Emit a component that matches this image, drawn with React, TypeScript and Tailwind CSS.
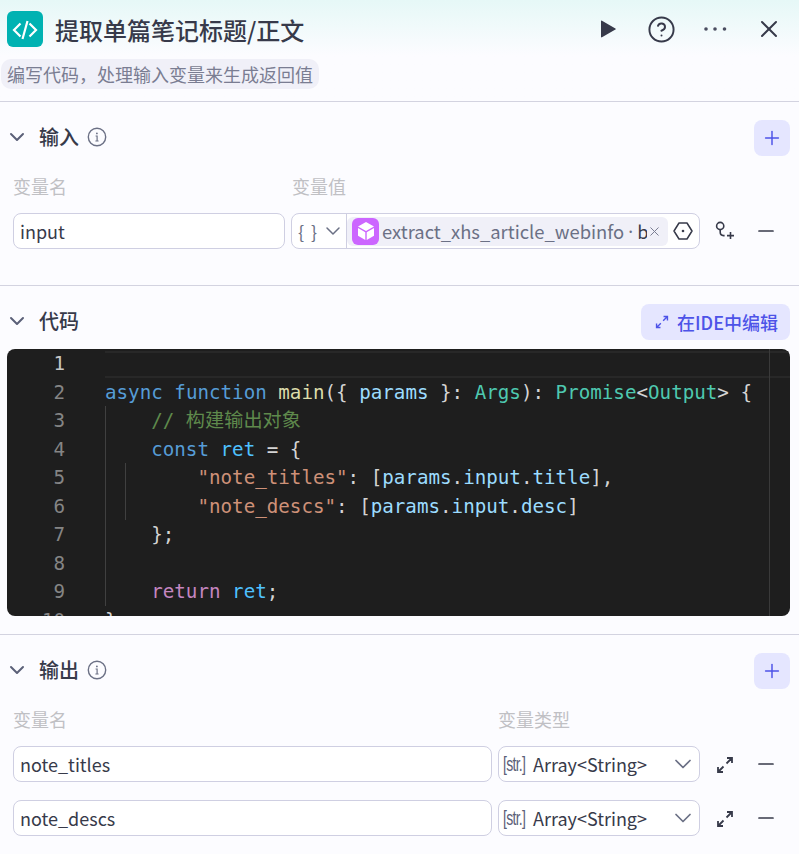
import { ChevronDown, Minus, Plus, X, CircleHelp } from "lucide-react";

const kw = "text-[#569cd6]";
const vr = "text-[#9cdcfe]";
const ty = "text-[#4ec9b0]";
const cn = "text-[#4fc1ff]";
const st = "text-[#ce9178]";

const codeLines: [string, string?][][] = [
  [],
  [
    ["async", kw], [" "], ["function", kw], [" "], ["main", "text-[#dcdcaa]"], ["({ "], ["params", vr], [" }: "], ["Args", ty], ["): "], ["Promise", ty], ["<"], ["Output", ty], ["> {"],
  ],
  [["    "], ["// 构建输出对象", "text-[#5f8a4c]"]],
  [["    "], ["const", kw], [" "], ["ret", cn], [" = {"]],
  [["        "], ['"note_titles"', st], [": ["], ["params", vr], ["."], ["input", vr], ["."], ["title", vr], ["],"]],
  [["        "], ['"note_descs"', st], [": ["], ["params", vr], ["."], ["input", vr], ["."], ["desc", vr], ["]"]],
  [["    };"]],
  [],
  [["    "], ["return", "text-[#c586c0]"], [" "], ["ret", cn], [";"]],
  [["}"]],
];

function SectionHeader({ title, info }: { title: string; info?: boolean }) {
  return (
    <div className="flex items-center -mt-[2px]">
      <ChevronDown className="ml-[5px] text-[#5b6078]" size={24} strokeWidth={2} />
      <span className="ml-[10px] text-[20px] leading-[36px] font-medium text-[#373a4a]">{title}</span>
      {info && (
        <svg className="ml-2" width="20" height="20" viewBox="0 0 20 20" fill="none" stroke="#6b7085">
          <circle cx="10" cy="10" r="8.7" strokeWidth="1.4" />
          <path d="M8.6 9h1.5v5M8.4 14h3.2" strokeWidth="1.2" />
          <circle cx="9.9" cy="6.4" r="0.9" fill="#6b7085" stroke="none" />
        </svg>
      )}
    </div>
  );
}

function AddButton() {
  return (
    <button className="w-9 h-9 rounded-lg bg-[#e5e6ff] flex items-center justify-center">
      <Plus size={22} className="text-[#4d53e8]" strokeWidth={1.6} />
    </button>
  );
}

function ExpandIcon({ color = "#373a4a", size = 18 }: { color?: string; size?: number }) {
  return (
    <svg width={size} height={size} viewBox="0 0 18 18" fill="none" stroke={color} strokeWidth="1.8">
      <path d="M10.5 7.5 16 2M11 2h5v5M7.5 10.5 2 16M2 11v5h5" />
    </svg>
  );
}

function OutputRow({ name }: { name: string }) {
  return (
    <div className="flex items-center h-9">
      <div className="w-[479px] h-9 rounded-lg border border-[#cfcfe2] bg-white pl-[6px] text-[18px] leading-[34px] text-[#373a4a]">
        {name}
      </div>
      <div className="ml-[6px] w-[202px] h-9 rounded-lg border border-[#cfcfe2] bg-white flex items-center pl-[4px] pr-[2px] text-[#373a4a]">
        <span className="w-[27px] shrink-0 whitespace-nowrap origin-left scale-x-[0.7] text-[20px] leading-none tracking-[-1px] text-[#5b6078] font-['Liberation_Sans',sans-serif]">[str.]</span>
        <span className="ml-[3px] text-[18px] leading-[34px] flex-1">Array&lt;String&gt;</span>
        <ChevronDown size={28} strokeWidth={1.5} className="text-[#6b7085]" />
      </div>
      <div className="ml-[16px] mt-[2px]"><ExpandIcon /></div>
      <Minus size={24} className="ml-[20px] text-[#373a4a]" strokeWidth={1.7} />
    </div>
  );
}

export default function App() {
  return (
    <div className="w-[799px] h-[854px] overflow-hidden bg-[#fcfcff] font-['Noto_Sans_CJK_SC','Noto_Sans',sans-serif]">
      <div className="h-[101px] bg-gradient-to-b from-[#e6f8f7] to-[#fcfcff] to-[55%]">
        <div className="flex items-center pt-[11px] pl-[7px]">
          <div className="w-9 h-9 rounded-md bg-[#00b2b2] flex items-center justify-center">
            <svg width="26" height="24" viewBox="0 0 26 24" fill="none" stroke="white" strokeWidth="2.2">
              <path d="M8.5 6.5 2 13 8.5 19.5M17.5 6.5 24 13 17.5 19.5M15.5 4l-5 18" />
            </svg>
          </div>
          <h1 className="ml-3 translate-y-px text-[24px] leading-[36px] font-medium text-[#373a4a]">提取单篇笔记标题/正文</h1>
          <div className="ml-auto flex items-center pr-[16px]">
            <svg width="16" height="18" viewBox="0 0 16 18" className="mr-[31px]">
              <path d="M1 1.2v15.6c0 .6.5.8 1 .5l13.4-7.7c.5-.3.5-.9 0-1.2L2 .7c-.5-.3-1-.1-1 .5z" fill="#373a4a" />
            </svg>
            <CircleHelp size={29} className="text-[#373a4a] mr-[27px]" strokeWidth={1.6} />
            <svg width="24" height="6" viewBox="0 0 24 6" className="mr-[28px]" fill="#4a4d60">
              <circle cx="3" cy="3" r="1.8" />
              <circle cx="12" cy="3" r="1.8" />
              <circle cx="21.5" cy="3" r="1.8" />
            </svg>
            <X size={28} className="text-[#373a4a]" strokeWidth={1.7} />
          </div>
        </div>
        <div className="mt-[12px] ml-px w-[318px] h-[30px] rounded-[10px] bg-[#f0f0f8] px-[6px] text-[18px] leading-[31px] whitespace-nowrap text-[#7a7d92]">
          编写代码，处理输入变量来生成返回值
        </div>
      </div>

      <section className="border-t border-[#d3d3e0] h-[184px]">
        <div className="flex items-center justify-between pt-[18px] pr-[9px]">
          <SectionHeader title="输入" info />
          <AddButton />
        </div>
        <div className="flex mt-[17px] pl-[13px] text-[18px] leading-[26px] text-[#c0c0c4]">
          <span className="w-[279px]">变量名</span>
          <span>变量值</span>
        </div>
        <div className="flex items-center mt-[14px] pl-[13px]">
          <div className="w-[272px] h-9 rounded-lg border border-[#cfcfe2] bg-white pl-[6px] text-[18px] leading-[34px] text-[#373a4a]">input</div>
          <div className="ml-[6px] w-[409px] h-9 rounded-lg border border-[#cfcfe2] bg-white flex items-center overflow-hidden">
            <div className="w-[55px] h-full border-r border-[#cfcfe2] flex items-center shrink-0 pl-[6px] text-[#6b7085]">
              <span className="w-[23px] shrink-0 whitespace-nowrap text-[18px] tracking-[1.5px]">{"{ }"}</span>
              <ChevronDown size={24} strokeWidth={1.5} className="shrink-0" />
            </div>
            <div className="h-[29px] w-[321px] rounded-md bg-[#f0f0f8] flex items-center pl-[5px] shrink-0">
              <span className="w-[27px] h-[27px] rounded-md bg-[#cc66ff] flex items-center justify-center shrink-0">
                <svg width="18" height="20" viewBox="0 0 18 20" fill="white">
                  <path d="M9 1 17 5.5 9 10 1 5.5zM1 7l7.3 4.2V19L1 14.7zM17 7l-7.3 4.2V19l7.3-4.3z" />
                </svg>
              </span>
              <span className="ml-[3px] text-[18.4px] leading-[29px] text-[#6b7085] whitespace-nowrap">extract_xhs_article_webinfo</span>
              <span className="w-[13px] shrink-0 text-center text-[18px] leading-[29px] text-[#6b7085] font-['Noto_Sans',sans-serif]">·</span>
              <span className="w-[10px] shrink-0 overflow-hidden text-[18.4px] leading-[29px] text-[#373a4a]">b</span>
              <X size={15} strokeWidth={1.6} className="shrink-0 text-[#7a7d92]" />
            </div>
            <svg className="ml-[5px] shrink-0" width="20" height="20" viewBox="0 0 20 20" fill="none" stroke="#373a4a" strokeWidth="1.5">
              <path d="M6 2h8l5 8-5 8H6l-5-8z" strokeLinejoin="round" />
              <circle cx="10" cy="10" r="1.3" fill="#373a4a" stroke="none" />
            </svg>
          </div>
          <svg className="ml-[15px]" width="20" height="20" viewBox="0 0 20 20" fill="none" stroke="#373a4a" strokeWidth="1.6">
            <circle cx="5.2" cy="5" r="3.6" />
            <path d="M5.2 8.6V11c0 2.4 1.2 3.6 3.4 3.6h1M12 14.6h7M15.5 11v7" />
          </svg>
          <Minus size={24} className="ml-[19px] text-[#373a4a]" strokeWidth={1.7} />
        </div>
      </section>

      <section className="border-t border-[#d3d3e0] h-[349px]">
        <div className="flex items-center justify-between pt-[18px] pr-[9px]">
          <SectionHeader title="代码" />
          <button className="h-9 w-[149px] rounded-lg bg-[#e5e6ff] flex items-center pl-[14px] gap-[8px] text-[18px] font-medium text-[#4d53e8]">
            <ExpandIcon color="#4d53e8" size={14} />
            在IDE中编辑
          </button>
        </div>
        <div className="relative mt-[9px] ml-[7px] w-[783px] h-[267px] pt-px rounded-lg bg-[#1e1e1e] overflow-hidden font-['DejaVu_Sans_Mono','Noto_Sans_CJK_SC',monospace] text-[19.2px] leading-[28.5px] text-[#d4d4d4]">
          <div className="absolute left-[98px] top-[2px] right-0 h-[27px] border-y-2 border-[#282828]" />
          <div className="absolute left-[98px] top-[57px] h-[200px] w-px bg-[#404040]" />
          <div className="absolute left-[118px] top-[114px] h-[57px] w-px bg-[#404040]" />
          <div className="absolute left-[762px] top-0 bottom-0 w-px bg-[#3a3a3a]" />
          {codeLines.map((line, i) => (
            <div key={i} className="flex h-[28.5px]">
              <span className={`w-[58px] text-right shrink-0 ${i === 0 ? "text-[#c6c6c6]" : "text-[#858585]"}`}>{i + 1}</span>
              <span className="ml-[40px] whitespace-pre">
                {line.map((t, j) => (
                  <span key={j} className={t[1]}>{t[0]}</span>
                ))}
              </span>
            </div>
          ))}
        </div>
      </section>

      <section className="border-t border-[#d3d3e0]">
        <div className="flex items-center justify-between pt-[18px] pr-[9px]">
          <SectionHeader title="输出" info />
          <AddButton />
        </div>
        <div className="flex mt-[17px] pl-[13px] text-[18px] leading-[26px] text-[#c0c0c4]">
          <span className="w-[485px]">变量名</span>
          <span>变量类型</span>
        </div>
        <div className="mt-[14px] pl-[13px] flex flex-col gap-[18px]">
          <OutputRow name="note_titles" />
          <OutputRow name="note_descs" />
        </div>
      </section>
    </div>
  );
}
